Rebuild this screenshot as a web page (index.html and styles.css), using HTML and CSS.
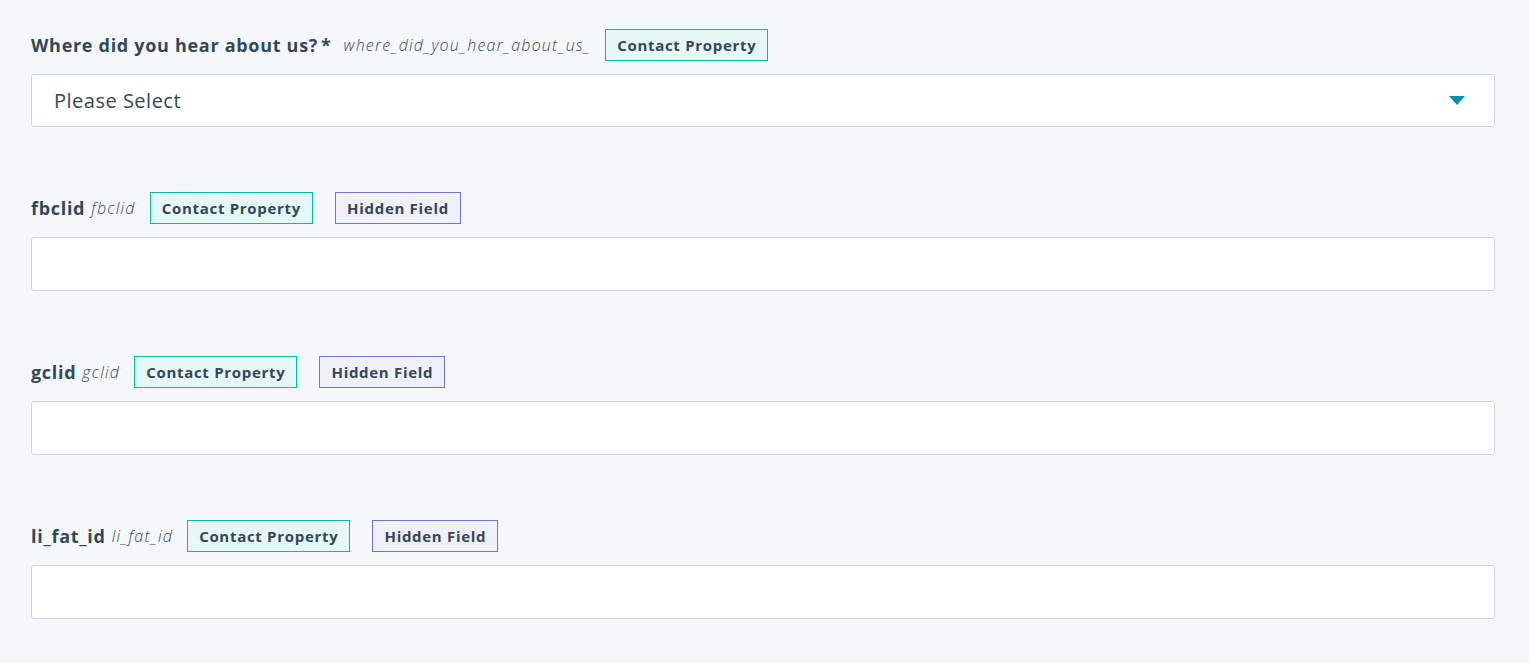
FILE: index.html
```html
<!DOCTYPE html>
<html lang="en">
<head>
  <meta charset="UTF-8">
  <meta name="viewport" content="width=device-width, initial-scale=1">
  <title>Form fields</title>
  <link rel="stylesheet" href="styles.css">
</head>
<body>

  <form class="fields">
    <div class="field">
      <div class="field-head">
        <label class="name">Where did you hear about us?<span class="req">*</span></label>
        <span class="internal">where_did_you_hear_about_us_</span>
        <span class="tag contact">Contact Property</span>
      </div>
      <div class="select">
        <span>Please Select</span>
        <svg class="caret" width="16" height="9" viewBox="0 0 16 9"><path d="M0 0h16L8 9z" fill="#0091ae"/></svg>
      </div>
    </div>

    <div class="field">
      <div class="field-head">
        <label class="name">fbclid</label>
        <span class="internal">fbclid</span>
        <span class="tag contact">Contact Property</span>
        <span class="tag hidden">Hidden Field</span>
      </div>
      <input type="text" class="input">
    </div>

    <div class="field">
      <div class="field-head">
        <label class="name">gclid</label>
        <span class="internal">gclid</span>
        <span class="tag contact">Contact Property</span>
        <span class="tag hidden">Hidden Field</span>
      </div>
      <input type="text" class="input">
    </div>

    <div class="field">
      <div class="field-head">
        <label class="name">li_fat_id</label>
        <span class="internal">li_fat_id</span>
        <span class="tag contact">Contact Property</span>
        <span class="tag hidden">Hidden Field</span>
      </div>
      <input type="text" class="input">
    </div>
  </form>

</body>
</html>
```

FILE: styles.css
```css
body {
  margin: 0;
  font-family: "Open Sans", Lato, sans-serif;
  background-color: #f5f8fa;
  color: #33475b;
}
.fields {
  padding: 29px 34px 0 31px;
  display: flex;
  flex-direction: column;
  gap: 65px;
}
.field-head {
  display: flex;
  align-items: center;
  height: 32px;
  margin-bottom: 13px;
}
.name {
  font-size: 18px;
  font-weight: bold;
  letter-spacing: 0.7px;
}
.req {
  margin-left: 3px;
}
.internal {
  font-style: italic;
  font-weight: 300;
  font-size: 16px;
  letter-spacing: 1.2px;
  margin-left: 6px;
  margin-right: 14px;
}
.field:first-child .internal {
  margin-left: 12px;
}
.tag {
  box-sizing: border-box;
  height: 32px;
  padding: 0 11px;
  display: flex;
  align-items: center;
  font-size: 15px;
  font-weight: bold;
  letter-spacing: 0.7px;
  border: 1px solid;
  margin-right: 22px;
}
.tag.contact {
  border-color: #00bda5;
  background-color: #e5f8f6;
}
.tag.hidden {
  border-color: #6a78d1;
  background-color: #f0f0fa;
}
.select,
.input {
  box-sizing: border-box;
  width: 100%;
  height: 54px;
  background: #fff;
  border: 1px solid #cbd6e2;
  border-radius: 3px;
  font-family: inherit;
  font-size: 20px;
  letter-spacing: 0.5px;
  color: #33475b;
}
.select {
  display: flex;
  align-items: center;
  justify-content: space-between;
  padding: 0 29px 0 22px;
  height: 53px;
}
.input {
  display: block;
  padding: 0 22px;
  outline: none;
}
```
